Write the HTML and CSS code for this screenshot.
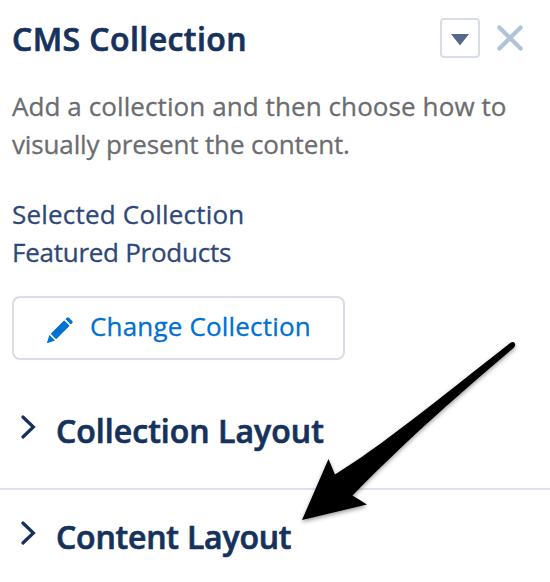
FILE: index.html
```html
<!DOCTYPE html>
<html lang="en">
<head>
<meta charset="utf-8">
<title>CMS Collection</title>
<link rel="stylesheet" href="styles.css">
</head>
<body>
<main class="panel">
  <header class="header">
    <h1 class="title">CMS Collection</h1>
    <button class="menu" aria-label="Menu"><svg width="18" height="12" viewBox="0 0 18 12"><path d="M0 0H18L9 11.5Z" fill="#54698d"/></svg></button>
    <button class="close" aria-label="Close"><svg width="26" height="26" viewBox="0 0 26 26"><path d="M2.4 2.4L23.6 23.6M23.6 2.4L2.4 23.6" stroke="#b0c4d9" stroke-width="4.2" stroke-linecap="round"/></svg></button>
  </header>
  <p class="description"><span class="line-one">Add a collection and then choose how to</span><br><span class="line-two">visually present the content.</span></p>
  <div class="selection">
    <div class="selection-label">Selected Collection</div>
    <div class="selection-value">Featured Products</div>
  </div>
  <button class="change">
    <svg width="26" height="26" viewBox="0 0 26 26" fill="#0070d2"><path d="M0 25.8L2.2 18.4Q2.6 18 3 18.4L7.6 23Q8 23.500 7.400 23.800L.7 26Q0 26.200 0 25.800Z"/><path d="M4.200 16.300L16.700 3.800Q17.200 3.400 17.700 3.800L22.100 8.200Q22.600 8.700 22.100 9.200L9.600 21.700Q9.100 22.100 8.600 21.700L4.200 17.300Q3.700 16.800 4.200 16.300Z"/><path d="M18.800 1.700L19.800.7Q20.800-.2 22 .8L25.200 4Q26.200 5 25.200 6.200L24.200 7.100Q23.800 7.500 23.300 7.100L18.800 2.600Q18.400 2.100 18.800 1.700Z"/></svg>
    <span class="change-label">Change Collection</span>
  </button>
  <section class="section">
    <svg class="chevron" width="16" height="26" viewBox="0 0 16 26"><path d="M2.900 3L13.400 13L2.900 23" fill="none" stroke="#16325c" stroke-width="3.200" stroke-linecap="round"/></svg>
    <h2 class="section-title collection">Collection Layout</h2>
  </section>
  <section class="section">
    <svg class="chevron" width="16" height="26" viewBox="0 0 16 26"><path d="M2.900 3L13.400 13L2.900 23" fill="none" stroke="#16325c" stroke-width="3.200" stroke-linecap="round"/></svg>
    <h2 class="section-title content">Content Layout</h2>
  </section>
  <svg class="arrow" width="240" height="210" viewBox="290 330 240 210"><path d="M302 520L328.500 459L335 474.500C380 447 435 402 510.500 342.800Q513.500 341 515 343.500Q515.800 346 513.500 348C445 406 400 447 352.500 495.500L367 504.500Z"/></svg>
</main>
</body>
</html>
```
FILE: styles.css
```css
* { box-sizing: border-box; }
body {
  margin: 0;
  background: #fff;
  font-family: "Open Sans", "Noto Sans", sans-serif;
  color: #16325c;
}
.panel { position: relative; width: 550px; height: 582px; overflow: hidden; padding-top: 18px; }
.header { display: flex; height: 40px; padding: 0 27px 0 12px; }
h1, h2, p { margin: 0; }
button { padding: 0; background: #fff; font-family: inherit; }
.title { flex: 1; padding-top: 1px; font-size: 32px; line-height: 40px; font-weight: 600; white-space: nowrap; letter-spacing: 0.42px; }
.title, .section-title { -webkit-text-stroke: 0.7px currentColor; }
.menu { display: flex; align-items: center; justify-content: center; width: 40px; height: 40px; border: 2px solid #d8dde6; border-radius: 4px; }
.menu svg { margin-top: 3px; }
.close { display: flex; align-items: center; justify-content: center; width: 26px; margin-left: 17px; border: 0; }
.description, .selection, .change { -webkit-text-stroke: 0.3px currentColor; }
.description { margin: 29px 0 0 12px; color: #6b6d70; font-size: 26px; line-height: 38px; white-space: nowrap; }
.line-one { letter-spacing: 0.09px; }
.line-two { letter-spacing: -0.14px; }
.selection { margin: 32px 0 0 12px; color: #2f4878; font-size: 26px; line-height: 38px; white-space: nowrap; }
.selection-label { letter-spacing: 0.2px; }
.selection-value { letter-spacing: -0.26px; }
.change { display: flex; align-items: center; width: 333px; height: 64px; margin: 25px 0 0 12px; padding-left: 33px; border: 2px solid #d8dde6; border-radius: 8px; color: #0070d2; font-size: 26px; line-height: 38px; white-space: nowrap; }
.change svg { margin-top: 3px; overflow: visible; }
.change-label { margin: -4px 0 0 17px; letter-spacing: 0.18px; }
.section { display: flex; align-items: flex-start; padding-left: 20px; }
.section:nth-of-type(1) { height: 130px; padding-top: 50px; border-bottom: 2px solid #dfe2ee; }
.section:nth-of-type(2) { height: 92px; padding-top: 26px; }
.chevron { margin-top: 4px; }
.section-title { margin: 1px 0 0 20px; font-size: 32px; line-height: 40px; font-weight: 600; white-space: nowrap; }
.collection { letter-spacing: 0.03px; }
.content { letter-spacing: -0.2px; }
.arrow { position: absolute; left: 290px; top: 330px; filter: drop-shadow(0 2px 2px rgba(0,0,0,.4)); }
```
